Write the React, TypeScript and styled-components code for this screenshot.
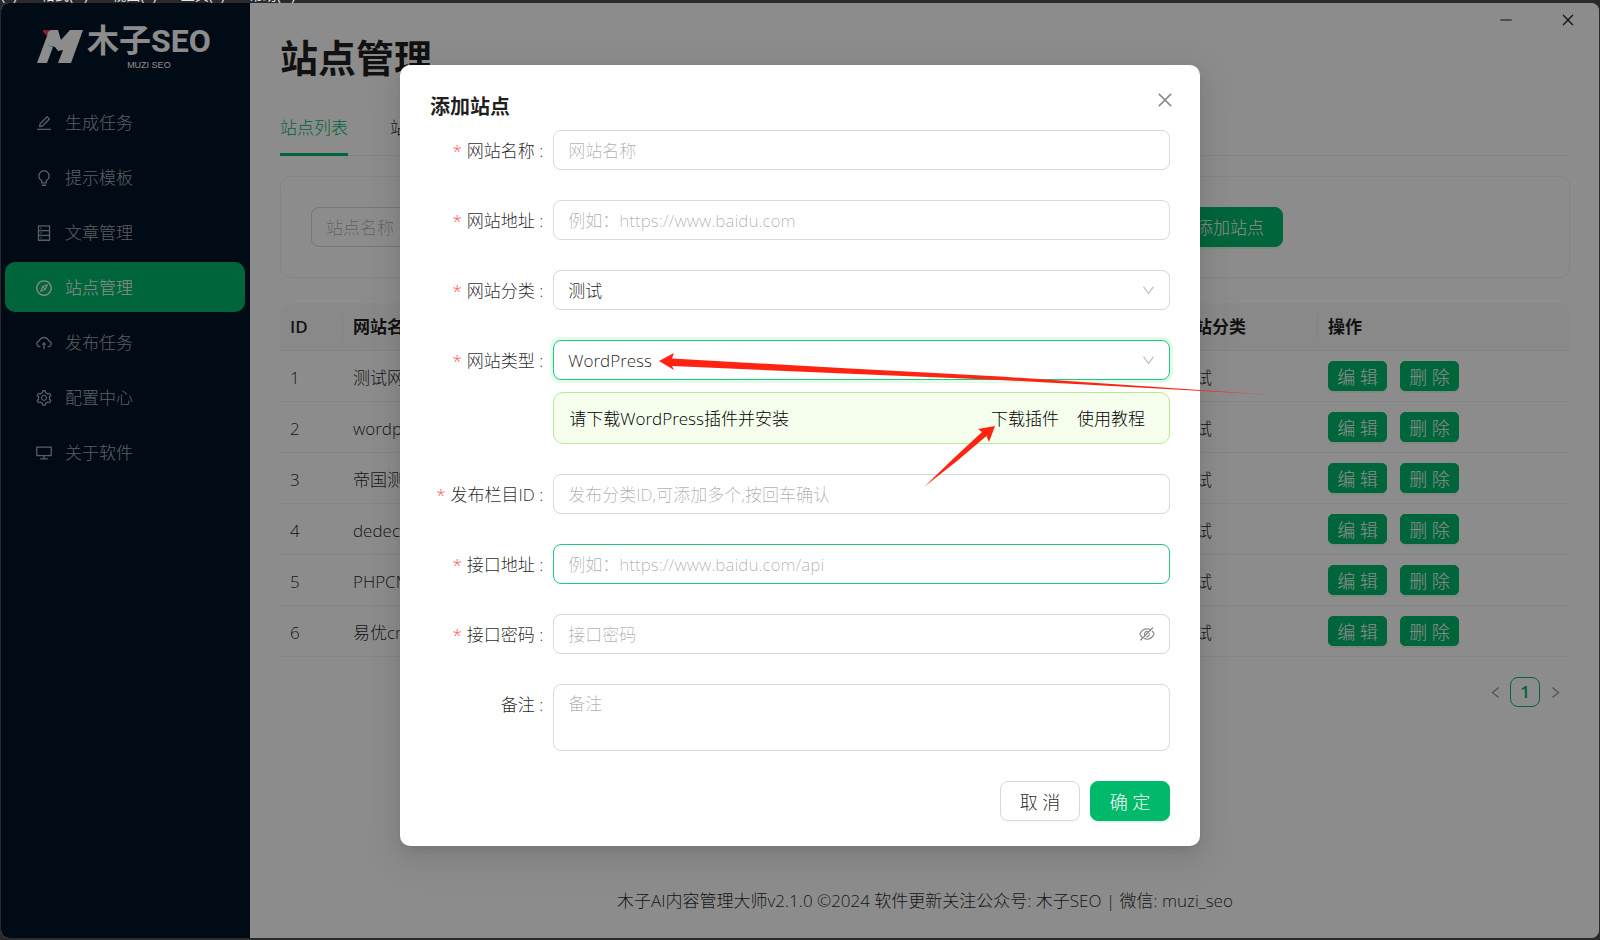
import React from "react";
import styled, { createGlobalStyle, css } from "styled-components";
import {
  AiOutlineBulb,
  AiOutlineClose,
  AiOutlineCloudUpload,
  AiOutlineCompass,
  AiOutlineDatabase,
  AiOutlineDesktop,
  AiOutlineDown,
  AiOutlineEdit,
  AiOutlineEyeInvisible,
  AiOutlineLeft,
  AiOutlineMinus,
  AiOutlineRight,
  AiOutlineSetting,
} from "react-icons/ai";

const GREEN = "#00b96b";
const TEXT = "rgba(0, 0, 0, 0.88)";
const LINE = "#f0f0f0";
const BORDER = "#d9d9d9";

const GlobalStyle = createGlobalStyle`
  * { box-sizing: border-box; }
  body { margin: 0; background: #2a2a2d; }
  body, button, input, select, textarea {
    font-family: "Open Sans", "Noto Sans CJK SC", sans-serif;
    font-size: 17px;
    font-weight: 300;
    line-height: 28px;
    color: ${TEXT};
  }
  button { cursor: pointer; padding: 0; border: 0; background: none; }
`;

/* ---------- desktop and window ---------- */

const Desktop = styled.div`
  min-height: 100vh;
  display: flex;
  flex-direction: column;
  padding: 0 1px 2px;
`;

const BackMenu = styled.div`
  height: 3px;
  display: flex;
  align-items: flex-end;
  gap: 24px;
  overflow: hidden;
  color: #e6e6e6;
  font-size: 14px;
  font-weight: 400;
  line-height: 16px;
`;

const AppWindow = styled.div`
  position: relative;
  flex: 1;
  display: flex;
  border-radius: 8px;
  overflow: hidden;
  background: #fff;
`;

const Sidebar = styled.aside`
  flex: none;
  width: 249px;
  background: #001529;
  padding: 20px 5px 20px 4px;
`;

const Logo = styled.div`
  display: flex;
  padding-left: 32px;
  gap: 4px;
  height: 74px;
  color: #fff;

  svg { flex: none; margin-top: 4px; }
`;

const LogoText = styled.div`
  display: flex;
  flex-direction: column;
  align-items: center;
`;

const LogoName = styled.div`
  font-family: Roboto, "Noto Sans CJK SC", sans-serif;
  font-size: 32px;
  line-height: 36px;
  font-weight: 700;
  white-space: nowrap;
`;

const LogoSub = styled.div`
  font-family: "Liberation Sans", sans-serif;
  font-size: 9px;
  line-height: 12px;
  font-weight: 400;
`;

const Menu = styled.nav`
  display: flex;
  flex-direction: column;
  gap: 5px;
`;

const MenuItem = styled.a<{ $active?: boolean }>`
  display: flex;
  align-items: center;
  gap: 12px;
  height: 50px;
  padding: 2px 0 0 30px;
  border-radius: 10px;
  text-decoration: none;
  color: ${(p) => (p.$active ? "#fff" : "rgba(255, 255, 255, 0.65)")};
  background: ${(p) => (p.$active ? GREEN : "transparent")};

  svg { font-size: 18px; }
`;

const Main = styled.main`
  flex: 1;
  min-width: 0;
  display: flex;
  flex-direction: column;
  padding: 0 29px 0 30px;
`;

const WindowControls = styled.div`
  display: flex;
  justify-content: flex-end;
  gap: 46px;
  height: 34px;
  margin-right: -6px;

  button { display: flex; align-items: center; }
  svg { font-size: 16px; }
`;

const PageTitle = styled.h1`
  margin: 0 0 31px;
  font-size: 38px;
  line-height: 40px;
  font-weight: 700;
`;

const Tabs = styled.div`
  display: flex;
  gap: 42px;
  border-bottom: 1px solid ${LINE};
`;

const Tab = styled.button<{ $active?: boolean }>`
  height: 48px;
  padding-bottom: 6px;
  margin-bottom: -1px;
  border-bottom: 3px solid ${(p) => (p.$active ? GREEN : "transparent")};
  color: ${(p) => (p.$active ? GREEN : TEXT)};
`;

const SearchCard = styled.form`
  display: flex;
  justify-content: space-between;
  margin: 20px 0 25px;
  padding: 30px 286px 30px 30px;
  border: 1px solid ${LINE};
  border-radius: 10px;
`;

/* ---------- shared controls ---------- */

const control = css<{ $hot?: boolean }>`
  display: block;
  width: 100%;
  height: 40px;
  padding: 5px 14px 4px;
  border: 1px solid ${(p) => (p.$hot ? "#20c77c" : BORDER)};
  border-radius: 8px;
  background: #fff;
  outline: none;

  &::placeholder { color: rgba(0, 0, 0, 0.32); opacity: 1; }
`;

const TextInput = styled.input<{ $hot?: boolean }>`
  ${control}
`;

const SearchInput = styled(TextInput)`
  width: 250px;
`;

const TextArea = styled.textarea<{ $hot?: boolean }>`
  ${control}
  height: 67px;
  resize: none;
`;

const Select = styled.select<{ $hot?: boolean; $focused?: boolean }>`
  ${control}
  appearance: none;
  box-shadow: ${(p) => (p.$focused ? "0 0 0 3px rgba(5, 220, 100, 0.12)" : "none")};
`;

const Field = styled.div`
  position: relative;
`;

const FieldIcon = styled.span<{ $dark?: boolean }>`
  position: absolute;
  right: 14px;
  top: 0;
  height: 40px;
  display: flex;
  align-items: center;
  pointer-events: none;
  color: ${(p) => (p.$dark ? "rgba(0, 0, 0, 0.45)" : "rgba(0, 0, 0, 0.25)")};
  font-size: ${(p) => (p.$dark ? 18 : 15)}px;
`;

const Button = styled.button<{ $primary?: boolean; $small?: boolean }>`
  height: ${(p) => (p.$small ? 30 : 40)}px;
  min-width: ${(p) => (p.$small ? 59 : 80)}px;
  padding: 1px ${(p) => (p.$small ? 8 : 18)}px 0;
  font-size: 18px;
  border: 1px solid ${(p) => (p.$primary ? GREEN : BORDER)};
  border-radius: ${(p) => (p.$small ? 5 : 8)}px;
  color: ${(p) => (p.$primary ? "#fff" : TEXT)};
  background: ${(p) => (p.$primary ? GREEN : "#fff")};
  box-shadow: 0 2px 0 ${(p) => (p.$primary ? "rgba(5, 200, 100, 0.1)" : "rgba(0, 0, 0, 0.02)")};
  white-space: nowrap;
`;

const AddButton = styled(Button)`
  font-size: 17px;
`;

/* ---------- table ---------- */

const Table = styled.table`
  width: 100%;
  table-layout: fixed;
  border-collapse: separate;
  border-spacing: 0;
`;

const Th = styled.th<{ $w?: number }>`
  width: ${(p) => (p.$w ? `${p.$w}px` : "auto")};
  height: 48px;
  padding: 1px 0 0;
  text-align: left;
  font-weight: 600;
  background: #fafafa;
  border-bottom: 1px solid ${LINE};

  &:first-child { border-top-left-radius: 10px; }
  &:last-child { border-top-right-radius: 10px; }
  &:not(:last-child) > div { border-right: 1px solid ${LINE}; }
`;

const ThInner = styled.div`
  padding-left: 10px;
`;

const Td = styled.td`
  height: 51px;
  padding: 3px 10px 0;
  white-space: nowrap;
  border-bottom: 1px solid ${LINE};

  &:last-child { padding-top: 0; }
`;

const Actions = styled.div`
  display: flex;
  gap: 13px;
`;

const Pagination = styled.nav`
  display: flex;
  justify-content: flex-end;
  margin-top: 20px;

  button {
    width: 30px;
    height: 30px;
    display: flex;
    align-items: center;
    justify-content: center;
  }
`;

const PageArrow = styled.button`
  color: rgba(0, 0, 0, 0.45);
  svg { font-size: 15px; }
`;

const PageNumber = styled.button`
  border: 1px solid ${GREEN};
  border-radius: 8px;
  color: ${GREEN};
  font-weight: 600;
`;

const Footer = styled.footer`
  margin-top: auto;
  padding-bottom: 23px;
  text-align: center;
`;

/* ---------- dialog ---------- */

const Mask = styled.div`
  position: absolute;
  inset: 0;
  display: flex;
  justify-content: center;
  align-items: flex-start;
  padding-top: 62px;
  background: rgba(0, 0, 0, 0.45);
`;

const Dialog = styled.section`
  position: relative;
  width: 800px;
  max-width: 100%;
  padding: 25px 30px;
  border-radius: 10px;
  background: #fff;
  box-shadow: 0 8px 20px rgba(0, 0, 0, 0.08), 0 4px 8px -5px rgba(0, 0, 0, 0.12),
    0 11px 35px 10px rgba(0, 0, 0, 0.05);
`;

const DialogHead = styled.header`
  display: flex;
  justify-content: space-between;
  height: 40px;
`;

const DialogTitle = styled.h2`
  margin: 0;
  font-size: 20px;
  line-height: 34px;
  font-weight: 600;
`;

const CloseButton = styled.button`
  display: flex;
  width: 30px;
  height: 20px;
  margin-right: -10px;
  align-items: center;
  justify-content: center;
  color: rgba(0, 0, 0, 0.45);
  svg { font-size: 20px; }
`;

const Form = styled.form`
  display: flex;
  flex-direction: column;
  gap: 30px;
`;

const FormRow = styled.div`
  display: grid;
  grid-template-columns: 1fr 5fr;
  align-items: start;
`;

const Label = styled.label<{ $required?: boolean }>`
  padding: 1px 10px 0 0;
  line-height: 39px;
  text-align: right;
  white-space: nowrap;

  &::before {
    content: ${(p) => (p.$required ? '"*"' : "none")};
    margin-right: 5px;
    color: #ff4d4f;
  }
`;

const PluginNotice = styled.div`
  display: flex;
  align-items: center;
  gap: 18px;
  margin-top: 12px;
  height: 52px;
  padding: 2px 24px 0 15px;
  border: 1px solid #b7eb8f;
  border-radius: 10px;
  background: #f6ffed;
  color: #000;

  span { flex: 1; }
  a { color: #000; text-decoration: none; }
`;

const DialogFoot = styled.footer`
  display: flex;
  justify-content: flex-end;
  gap: 10px;
`;

const Pointers = styled.svg`
  position: absolute;
  left: 0;
  top: 0;
  overflow: visible;
  pointer-events: none;
`;

const menu = [
  { label: "生成任务", Icon: AiOutlineEdit },
  { label: "提示模板", Icon: AiOutlineBulb },
  { label: "文章管理", Icon: AiOutlineDatabase },
  { label: "站点管理", Icon: AiOutlineCompass, active: true },
  { label: "发布任务", Icon: AiOutlineCloudUpload },
  { label: "配置中心", Icon: AiOutlineSetting },
  { label: "关于软件", Icon: AiOutlineDesktop },
];

const sites = ["测试网站", "wordpress", "帝国测试", "dedecms", "PHPCMS", "易优cms"];

export default function App() {
  return (
    <>
      <GlobalStyle />
      <Desktop>
        <BackMenu aria-hidden="true">
          <span>(E)</span>
          <span>格式(O)</span>
          <span>视图(V)</span>
          <span>工具(T)</span>
          <span>帮助(H)</span>
        </BackMenu>
        <AppWindow>
          <Sidebar>
            <Logo>
              <svg width="46" height="36" viewBox="0 0 46 36">
                <path d="M6 3 H14 L11 6 L10 9 L6 5 Z" fill="#f5394f" />
                <path
                  d="M14 3 H21 L24 13 L33 3 H46 L34 36 H21 L26 23 L21 24 L18 20 L10 18 L16 20 L10 36 H0 L10 9 L11 5 Z"
                  fill="#fff"
                />
              </svg>
              <LogoText>
                <LogoName>木子SEO</LogoName>
                <LogoSub>MUZI SEO</LogoSub>
              </LogoText>
            </Logo>
            <Menu>
              {menu.map(({ label, Icon, active }) => (
                <MenuItem key={label} href="#" $active={active}>
                  <Icon />
                  {label}
                </MenuItem>
              ))}
            </Menu>
          </Sidebar>
          <Main>
            <WindowControls>
              <button aria-label="最小化">
                <AiOutlineMinus />
              </button>
              <button aria-label="关闭窗口">
                <AiOutlineClose />
              </button>
            </WindowControls>
            <PageTitle>站点管理</PageTitle>
            <Tabs>
              <Tab $active>站点列表</Tab>
              <Tab>站点分类</Tab>
            </Tabs>
            <SearchCard>
              <SearchInput placeholder="站点名称" aria-label="站点名称" />
              <AddButton type="button" $primary>
                添加站点
              </AddButton>
            </SearchCard>
            <Table>
              <thead>
                <tr>
                  <Th $w={63}>
                    <ThInner>ID</ThInner>
                  </Th>
                  <Th>
                    <ThInner>网站名称</ThInner>
                  </Th>
                  <Th $w={150}>
                    <ThInner>网站分类</ThInner>
                  </Th>
                  <Th $w={252}>
                    <ThInner>操作</ThInner>
                  </Th>
                </tr>
              </thead>
              <tbody>
                {sites.map((name, i) => (
                  <tr key={name}>
                    <Td>{i + 1}</Td>
                    <Td>{name}</Td>
                    <Td>测试</Td>
                    <Td>
                      <Actions>
                        <Button $primary $small>
                          编 辑
                        </Button>
                        <Button $primary $small>
                          删 除
                        </Button>
                      </Actions>
                    </Td>
                  </tr>
                ))}
              </tbody>
            </Table>
            <Pagination aria-label="分页">
              <PageArrow aria-label="上一页">
                <AiOutlineLeft />
              </PageArrow>
              <PageNumber>1</PageNumber>
              <PageArrow aria-label="下一页">
                <AiOutlineRight />
              </PageArrow>
            </Pagination>
            <Footer>木子AI内容管理大师v2.1.0 ©2024 软件更新关注公众号: 木子SEO | 微信: muzi_seo</Footer>
          </Main>

          <Mask>
            <Dialog role="dialog" aria-labelledby="dialog-title">
              <DialogHead>
                <DialogTitle id="dialog-title">添加站点</DialogTitle>
                <CloseButton aria-label="关闭">
                  <AiOutlineClose />
                </CloseButton>
              </DialogHead>
              <Form>
                <FormRow>
                  <Label $required htmlFor="name">网站名称 :</Label>
                  <TextInput id="name" placeholder="网站名称" />
                </FormRow>
                <FormRow>
                  <Label $required htmlFor="url">网站地址 :</Label>
                  <TextInput id="url" placeholder="例如：https://www.baidu.com" />
                </FormRow>
                <FormRow>
                  <Label $required htmlFor="category">网站分类 :</Label>
                  <Field>
                    <Select id="category">
                      <option>测试</option>
                    </Select>
                    <FieldIcon>
                      <AiOutlineDown />
                    </FieldIcon>
                  </Field>
                </FormRow>
                <FormRow>
                  <Label $required htmlFor="type">网站类型 :</Label>
                  <div>
                    <Field>
                      <Select id="type" $hot $focused>
                        <option>WordPress</option>
                      </Select>
                      <FieldIcon>
                        <AiOutlineDown />
                      </FieldIcon>
                    </Field>
                    <PluginNotice>
                      <span>请下载WordPress插件并安装</span>
                      <a href="#">下载插件</a>
                      <a href="#">使用教程</a>
                    </PluginNotice>
                  </div>
                </FormRow>
                <FormRow>
                  <Label $required htmlFor="column">发布栏目ID :</Label>
                  <TextInput id="column" placeholder="发布分类ID,可添加多个,按回车确认" />
                </FormRow>
                <FormRow>
                  <Label $required htmlFor="api">接口地址 :</Label>
                  <TextInput id="api" $hot placeholder="例如：https://www.baidu.com/api" />
                </FormRow>
                <FormRow>
                  <Label $required htmlFor="secret">接口密码 :</Label>
                  <Field>
                    <TextInput id="secret" type="password" placeholder="接口密码" />
                    <FieldIcon $dark>
                      <AiOutlineEyeInvisible />
                    </FieldIcon>
                  </Field>
                </FormRow>
                <FormRow>
                  <Label htmlFor="note">备注 :</Label>
                  <TextArea id="note" placeholder="备注" />
                </FormRow>
                <DialogFoot>
                  <Button type="button">取 消</Button>
                  <Button type="button" $primary>
                    确 定
                  </Button>
                </DialogFoot>
              </Form>
              <Pointers width="800" height="781" fill="#ff2412" aria-hidden="true">
                <path d="M259 296 L274 288 L272 293.5 L450 303.5 L600 311.5 L866 329.5 L600 315 L450 308.7 L272 301 L274 305 Z" />
                <path d="M595 361 L589 377 L586.5 371 L557 396 L524 422 L555 392 L582 367 L578 364 Z" />
              </Pointers>
            </Dialog>
          </Mask>
        </AppWindow>
      </Desktop>
    </>
  );
}
